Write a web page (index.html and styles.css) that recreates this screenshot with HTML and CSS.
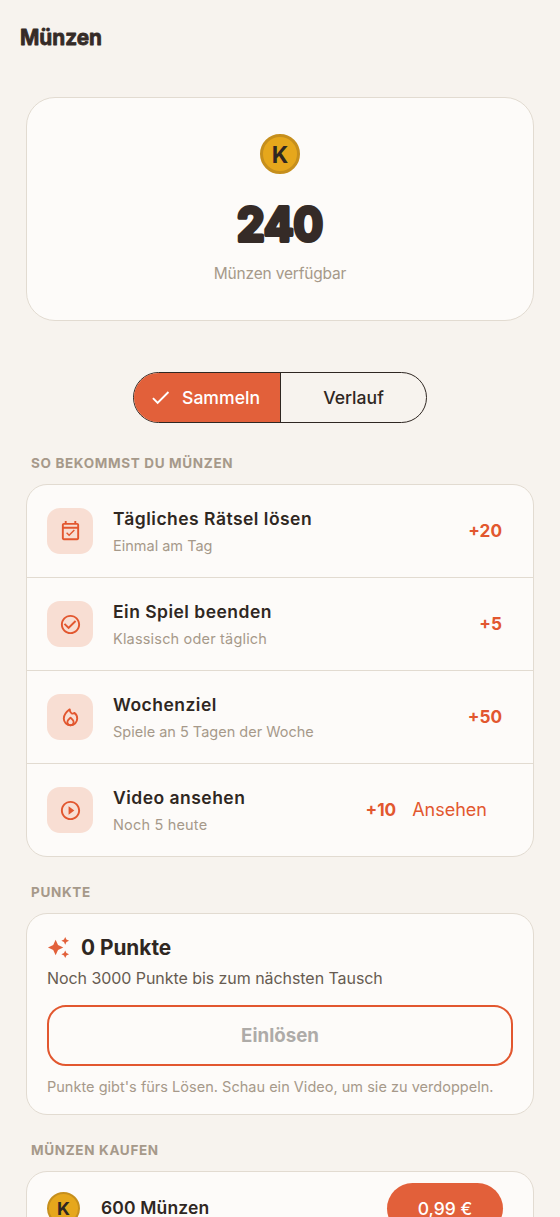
FILE: index.html
```html
<!DOCTYPE html>
<html lang="de">
<head>
<meta charset="utf-8">
<meta name="viewport" content="width=device-width, initial-scale=1">
<title>Münzen</title>
<link rel="stylesheet" href="styles.css">
</head>
<body>
<header class="topbar">
  <svg class="page-title" viewBox="0 0 100 36" role="heading" aria-level="1"><text x="0" y="25" textLength="82" lengthAdjust="spacingAndGlyphs">Münzen</text></svg>
</header>
<main class="content">
  <section class="balance card">
    <span class="coin coin-large">K</span>
    <svg class="balance-value" viewBox="0 0 140 76"><text x="27" y="55" textLength="86" lengthAdjust="spacingAndGlyphs">240</text></svg>
    <p class="balance-label">Münzen verfügbar</p>
  </section>

  <nav class="segments">
    <button class="segment segment-active"><svg class="check" viewBox="0 0 24 24"><path d="M9 16.17 4.83 12l-1.42 1.41L9 19 21 7l-1.41-1.41z"/></svg><span>Sammeln</span></button>
    <button class="segment"><span>Verlauf</span></button>
  </nav>

  <h2 class="label label-earn">So bekommst du Münzen</h2>
  <section class="card list">
    <div class="row">
      <span class="tile"><svg class="icon" viewBox="0 0 24 24"><path d="M16.53 11.06 15.47 10l-4.88 4.88-2.12-2.12-1.06 1.06L10.59 17l5.94-5.94zM19 3h-1V1h-2v2H8V1H6v2H5c-1.11 0-1.99.9-1.99 2L3 19c0 1.1.89 2 2 2h14c1.1 0 2-.9 2-2V5c0-1.1-.9-2-2-2zm0 16H5V9h14v10zM5 7V5h14v2H5z"/></svg></span>
      <div class="row-text"><h3 class="row-title">Tägliches Rätsel lösen</h3><p class="row-sub">Einmal am Tag</p></div>
      <span class="reward">+20</span>
    </div>
    <div class="row">
      <span class="tile"><svg class="icon" viewBox="0 0 24 24"><path d="M16.59 7.58 10 14.17l-3.59-3.58L5 12l5 5 8-8zM12 2C6.48 2 2 6.48 2 12s4.48 10 10 10 10-4.48 10-10S17.52 2 12 2zm0 18c-4.42 0-8-3.58-8-8s3.58-8 8-8 8 3.58 8 8-3.58 8-8 8z"/></svg></span>
      <div class="row-text"><h3 class="row-title">Ein Spiel beenden</h3><p class="row-sub sub-wide">Klassisch oder täglich</p></div>
      <span class="reward">+5</span>
    </div>
    <div class="row">
      <span class="tile"><svg class="icon icon-line" viewBox="0 0 24 24"><path d="M11.200 3.500C7.200 6.500 5 9.700 5 13.100a7 7 0 0 0 14 0c0-2.500-1.100-4.600-3-5.900-1.600 1.600-4.800.6-4.800-3.700z"/><path d="M12 12.200 9.700 14.500c-2.200 2.300-.7 5.500 2.300 5.500s4.500-3.200 2.300-5.500z"/></svg></span>
      <div class="row-text"><h3 class="row-title">Wochenziel</h3><p class="row-sub">Spiele an 5 Tagen der Woche</p></div>
      <span class="reward">+50</span>
    </div>
    <div class="row">
      <span class="tile"><svg class="icon" viewBox="0 0 24 24"><path d="m10 16.500 6-4.500-6-4.500zM12 2C6.480 2 2 6.480 2 12s4.480 10 10 10 10-4.480 10-10S17.520 2 12 2zm0 18c-4.410 0-8-3.590-8-8s3.590-8 8-8 8 3.590 8 8-3.590 8-8 8z"/></svg></span>
      <div class="row-text"><h3 class="row-title">Video ansehen</h3><p class="row-sub sub-wide">Noch 5 heute</p></div>
      <span class="reward">+10</span>
      <button class="watch">Ansehen</button>
    </div>
  </section>

  <h2 class="label">Punkte</h2>
  <section class="card points">
    <div class="points-head">
      <svg class="sparkle" viewBox="0 0 24 24"><path d="m19 9 1.250-2.750L23 5l-2.750-1.250L19 1l-1.250 2.750L15 5l2.750 1.250zm0 6-1.250 2.750L15 19l2.750 1.250L19 23l1.250-2.750L23 19l-2.750-1.250zm-7.500-5.500L9 4 6.500 9.500 1 12l5.500 2.500L9 20l2.500-5.500L17 12z"/></svg>
      <span class="points-value">0 Punkte</span>
    </div>
    <p class="points-progress">Noch 3000 Punkte bis zum nächsten Tausch</p>
    <button class="redeem" disabled>Einlösen</button>
    <p class="points-hint">Punkte gibt's fürs Lösen. Schau ein Video, um sie zu verdoppeln.</p>
  </section>

  <h2 class="label">Münzen kaufen</h2>
  <section class="card shop">
    <div class="shop-row">
      <span class="coin coin-small">K</span>
      <span class="row-title pack">600 Münzen</span>
      <button class="price">0,99 €</button>
    </div>
  </section>
</main>
</body>
</html>
```
FILE: styles.css
```css
* { box-sizing: border-box; }
html, body { height: 100%; overflow: hidden; }
body {
  margin: 0;
  background: #f7f3ee;
  color: #2f2722;
  font-family: Inter, "Open Sans", sans-serif;
}
h2, h3, p { margin: 0; white-space: nowrap; }
button { font: inherit; margin: 0; padding: 0; border: 0; background: none; }
.topbar { height: 97px; padding: 20px; }
.page-title { display: block; width: 100px; height: 36px; overflow: visible; }
.page-title text { font-size: 21.500px; font-weight: 700; fill: #352b27; stroke: #352b27; stroke-width: .8; stroke-linejoin: round; }
.content { padding: 0 26px; }
.card { background: #fdfbf9; border: 1px solid #e2dbd1; border-radius: 21px; }

.balance { height: 224px; border-radius: 29px; padding-top: 36px; display: flex; flex-direction: column; align-items: center; }
.coin { display: flex; flex: none; align-items: center; justify-content: center; border-radius: 50%; background: #e6a71c; border: 2px solid #c68f1d; color: #2f2722; font-weight: 700; }
.coin-large { width: 40px; height: 40px; font-size: 23px; border-width: 3px; padding-top: 1px; }
.coin-small { width: 33px; height: 33px; font-size: 18px; }
.balance-value { width: 140px; height: 76px; margin-top: 12px; }
.balance-value text { font-size: 46px; font-weight: 700; fill: #352b27; stroke: #352b27; stroke-width: 4; stroke-linejoin: round; }
.balance-label { margin-top: 1px; font-size: 15.500px; line-height: 22px; letter-spacing: -.17px; color: #a6998a; }

.segments { width: 294px; height: 51px; margin: 51px auto 30px; display: grid; grid-template-columns: 147px 145px; border: 1px solid #2f2722; border-radius: 26px; overflow: hidden; }
.segment { display: flex; align-items: center; justify-content: center; gap: 10px; font-size: 17.600px; font-weight: 500; color: #2f2722; }
.segment-active { background: #e2603a; color: #fff; border-right: 1px solid #2f2722; padding-right: 5px; }
.check { width: 23px; height: 23px; fill: currentColor; }

.label { height: 20px; margin: 25px 5px 11px; font-size: 13.500px; line-height: 20px; font-weight: 700; letter-spacing: .66px; text-transform: uppercase; color: #a6998a; }
.label-earn { margin-top: 0; }
.row { display: flex; align-items: center; height: 93px; padding: 0 31px 0 20px; border-bottom: 1px solid #e2dbd1; }
.row:last-child { height: 92px; border-bottom: 0; padding-right: 46px; }
.tile { flex: none; width: 46px; height: 46px; border-radius: 13px; display: flex; align-items: center; justify-content: center; background: #f8ded3; }
.icon { width: 23px; height: 23px; fill: #e2572f; }
.icon-line { fill: none; stroke: #e2572f; stroke-width: 2; stroke-linejoin: round; }
.row-text { flex: 1; margin-left: 20px; }
.row-title { font-size: 17.500px; line-height: 26px; font-weight: 600; letter-spacing: .48px; }
.row-sub { margin-top: 3px; font-size: 14.500px; line-height: 22px; color: #a6998a; }
.sub-wide { letter-spacing: .18px; }
.reward { font-size: 17.200px; line-height: 22px; margin-top: -1px; font-weight: 700; color: #e2572f; }
.watch { margin-left: 16px; margin-top: -1px; font-size: 18px; line-height: 22px; color: #e2572f; }

.points { height: 202px; padding: 20px 20px 0; }
.points-head { display: flex; align-items: center; height: 27px; gap: 11px; }
.sparkle { width: 23px; height: 23px; fill: #e2603a; }
.points-value { font-size: 20.800px; line-height: 26px; margin-top: 1px; font-weight: 700; }
.points-progress { margin-top: 5px; font-size: 16px; line-height: 24px; letter-spacing: -.06px; color: #675b51; }
.redeem { display: block; width: 100%; height: 61px; margin-top: 15px; border: 2px solid #e2572f; border-radius: 19px; font-size: 18.700px; font-weight: 700; color: #aeaba8; }
.points-hint { margin-top: 10px; font-size: 14.500px; line-height: 22px; letter-spacing: .02px; color: #a6998a; }

.shop { height: 90px; }
.shop-row { display: flex; align-items: center; height: 72px; padding: 0 30px 0 20px; }
.pack { flex: 1; margin-left: 21px; letter-spacing: .15px; }
.price { width: 116px; height: 51px; border-radius: 26px; background: #e2603a; color: #fff; font-size: 17.500px; font-weight: 500; }
```
